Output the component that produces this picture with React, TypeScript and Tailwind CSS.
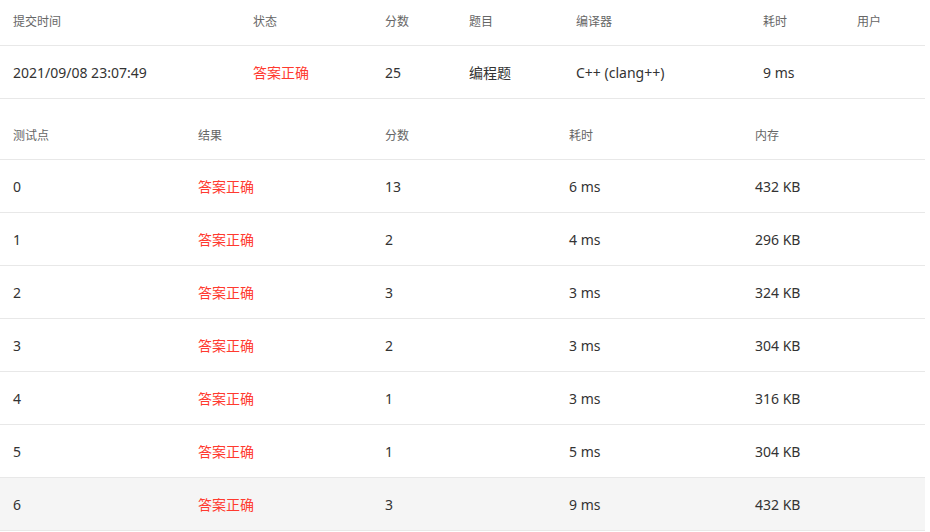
const submission = {
  time: '2021/09/08 23:07:49',
  status: '答案正确',
  score: '25',
  problem: '编程题',
  compiler: 'C++ (clang++)',
  cost: '9 ms',
  user: '',
}

const cases = [
  { id: '0', score: '13', cost: '6 ms', mem: '432 KB' },
  { id: '1', score: '2', cost: '4 ms', mem: '296 KB' },
  { id: '2', score: '3', cost: '3 ms', mem: '324 KB' },
  { id: '3', score: '2', cost: '3 ms', mem: '304 KB' },
  { id: '4', score: '1', cost: '3 ms', mem: '316 KB' },
  { id: '5', score: '1', cost: '5 ms', mem: '304 KB' },
  { id: '6', score: '3', cost: '9 ms', mem: '432 KB' },
]

const topCols = 'grid grid-cols-[240px_132px_84px_107px_187px_94px_81px]'
const caseCols = 'grid grid-cols-[185px_187px_184px_186px_183px]'

function Head({ labels, cols }: { labels: string[]; cols: string }) {
  return (
    <div className={`${cols} h-[46px] items-center border-b border-[#e8e8e8] text-[12px] text-[#666]`}>
      {labels.map((l) => (
        <div key={l} className="pl-[13px] -mt-[2px]">{l}</div>
      ))}
    </div>
  )
}

export default function App() {
  return (
    <div
      className="w-[925px] bg-white text-[14px] text-[#333]"
      style={{ fontFamily: '"Noto Sans", "Noto Sans CJK SC", sans-serif' }}
    >
      <Head labels={['提交时间', '状态', '分数', '题目', '编译器', '耗时', '用户']} cols={topCols} />
      <div className={`${topCols} h-[53px] items-center border-b border-[#e8e8e8]`}>
        <div className="pl-[13px]">{submission.time}</div>
        <div className="pl-[13px] text-[#ff3a2f]">{submission.status}</div>
        <div className="pl-[13px]">{submission.score}</div>
        <div className="pl-[13px]">{submission.problem}</div>
        <div className="pl-[13px]">{submission.compiler}</div>
        <div className="pl-[13px]">{submission.cost}</div>
        <div className="pl-[13px]">{submission.user}</div>
      </div>

      <div className="mt-[15px]">
        <Head labels={['测试点', '结果', '分数', '耗时', '内存']} cols={caseCols} />
        {cases.map((c, i) => (
          <div
            key={c.id}
            className={`${caseCols} h-[53px] items-center border-b border-[#e8e8e8] ${i === cases.length - 1 ? 'bg-[#f5f5f5]' : ''}`}
          >
            <div className="pl-[13px]">{c.id}</div>
            <div className="pl-[13px] text-[#ff3a2f]">答案正确</div>
            <div className="pl-[13px]">{c.score}</div>
            <div className="pl-[13px]">{c.cost}</div>
            <div className="pl-[13px]">{c.mem}</div>
          </div>
        ))}
      </div>
    </div>
  )
}
